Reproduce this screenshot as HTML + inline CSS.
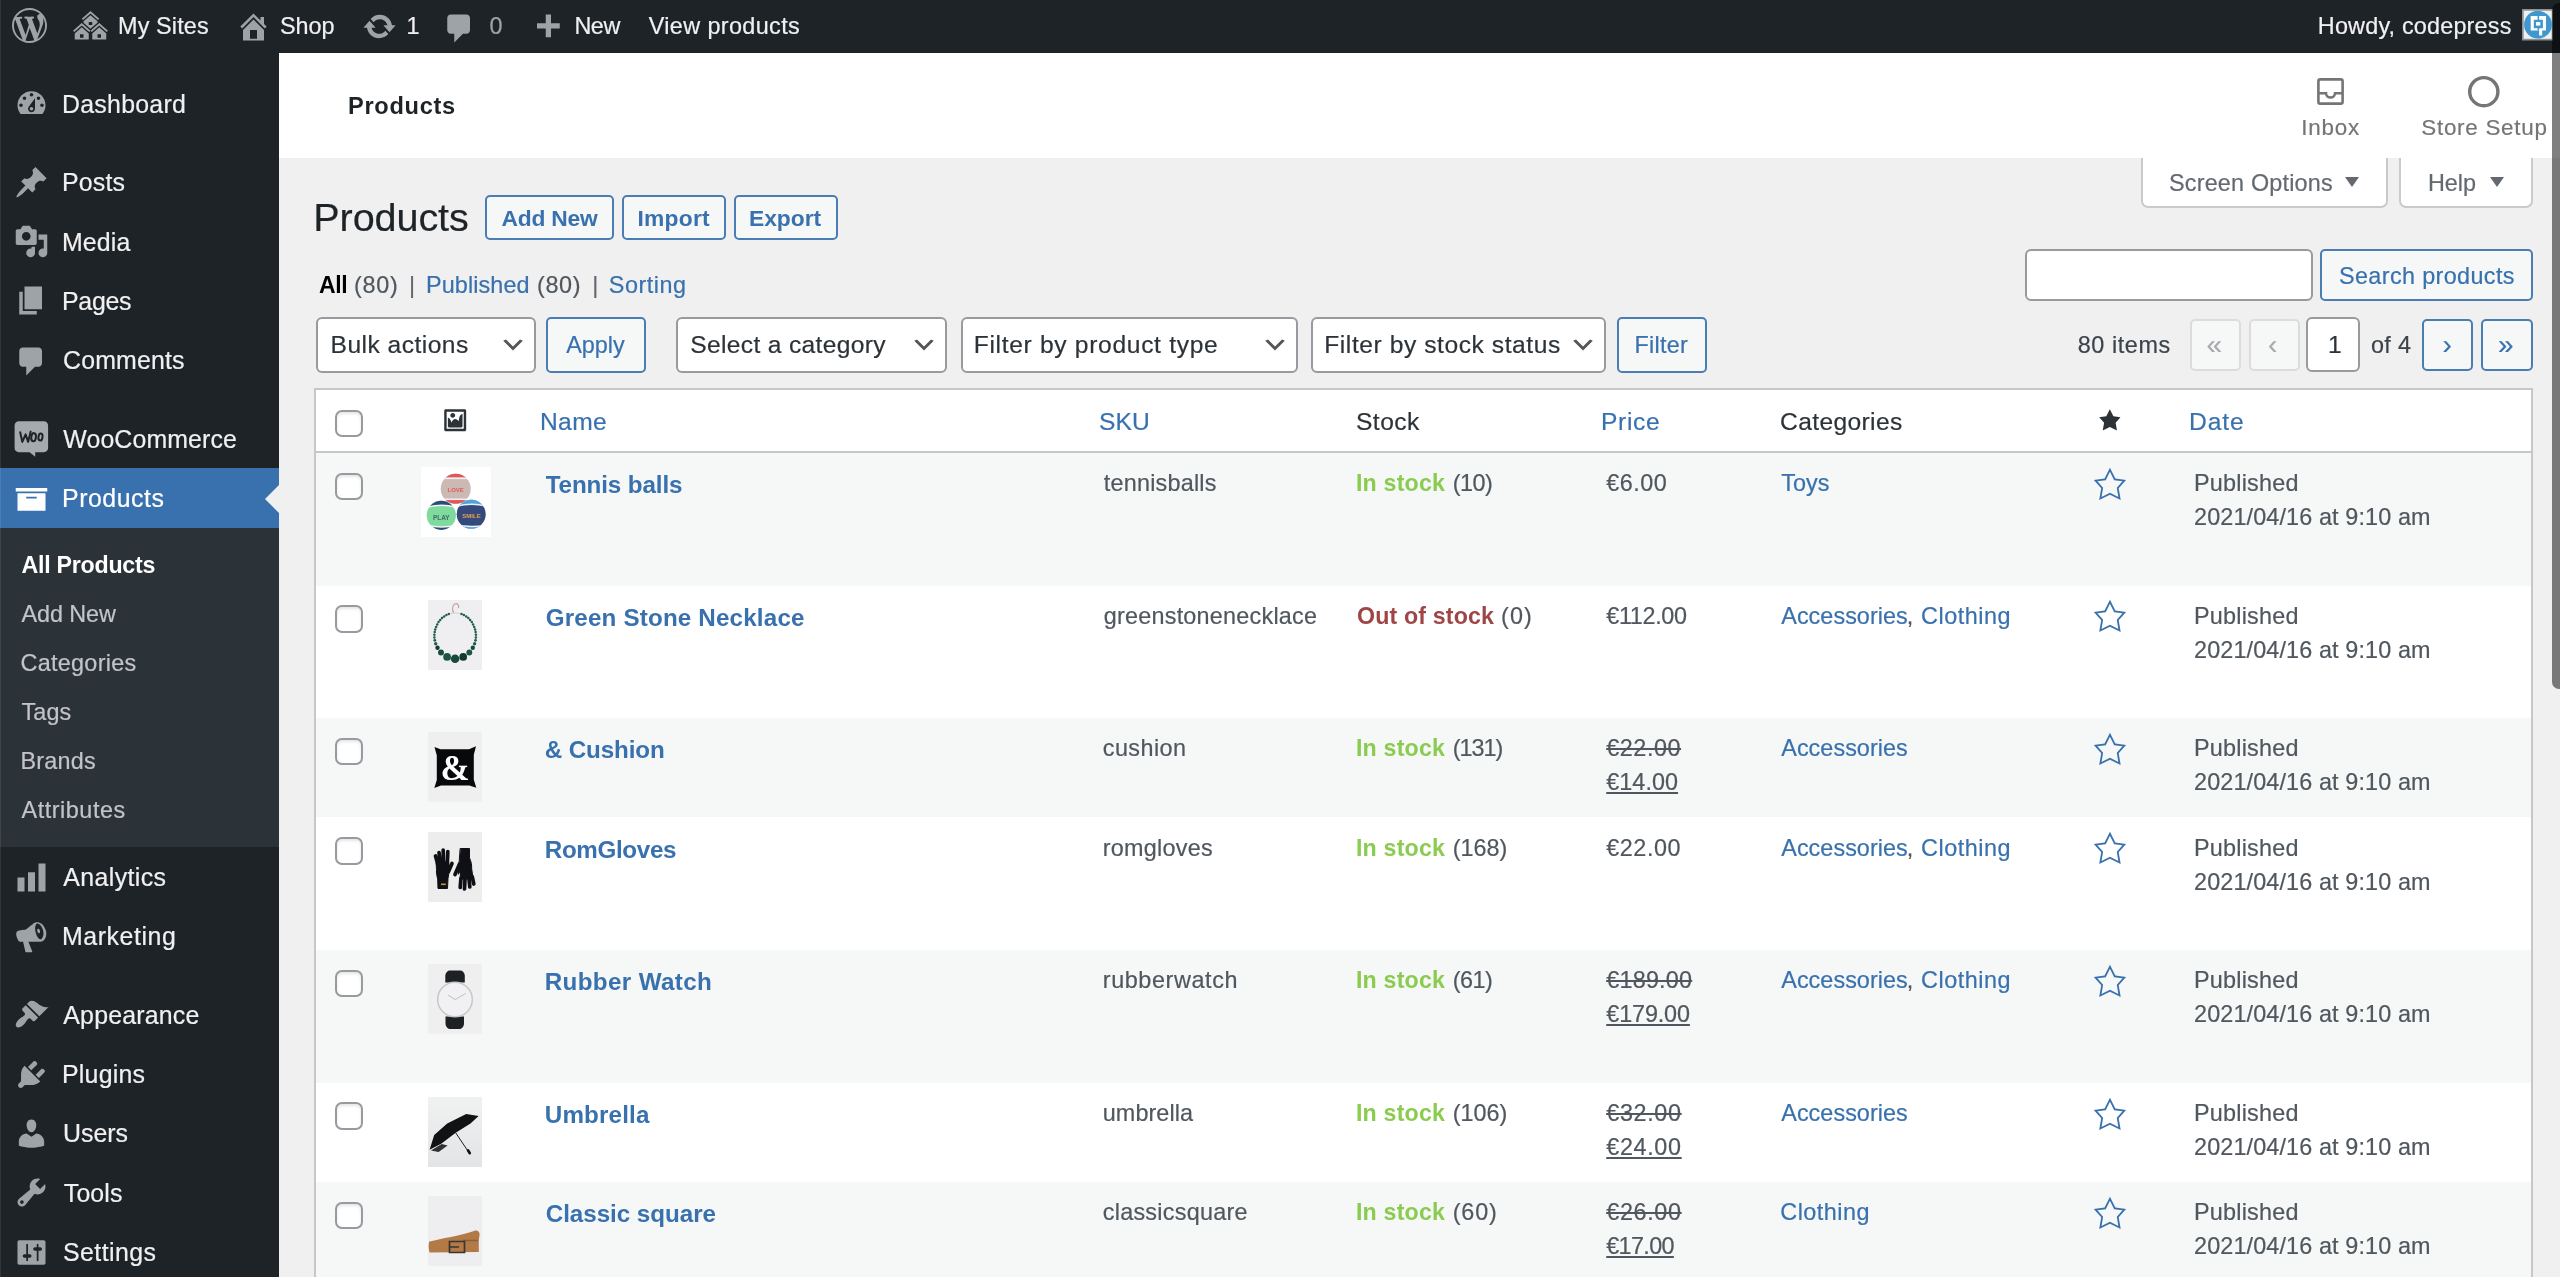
<!DOCTYPE html>
<html lang="en"><head><meta charset="utf-8"><title>Products ‹ Shop — WordPress</title>
<style>
html,body{margin:0;padding:0;background:#f0f0f1}
body{font-family:"Liberation Sans", sans-serif;width:2560px;height:1277px;overflow:hidden;position:relative}
#page{position:absolute;left:0;top:0;width:2560px;height:1277px;overflow:hidden;background:#f0f0f1;will-change:transform}
#page div,#page .t,#page .ic{position:absolute;box-sizing:border-box}
.t{white-space:pre;display:block;text-decoration:none;margin:0;padding:0;font-style:normal;font-weight:400;-webkit-text-stroke:.2px}
.b{font-weight:700;-webkit-text-stroke:0}
.btn{border:2px solid #4a7db4;border-radius:5px;background:#f6f7f7}
.btn.dis{border-color:#dcdcde;background:#f6f7f7}
.sel{border:2px solid #979a9f;border-radius:6px;background:#fff}
.cb{border:2px solid #979a9f;border-radius:7px;background:#fff;box-shadow:inset 0 2px 3px rgba(0,0,0,.1)}
.alt{background:#f6f7f7}
.th{filter:blur(.45px)}
</style></head>
<body>
<div id="page">
<!-- screen meta links -->
<div style="left:2141px;top:150px;width:247px;height:58px;background:#fff;border:2px solid #c9cacd;border-radius:0 0 7px 7px"></div>
<span class="t" style="left:2169.00px;top:167.90px;font-size:23.4px;line-height:30px;color:#646970;letter-spacing:0.190px;">Screen Options</span>
<div style="left:2344.6px;top:177px;width:0;height:0;border-left:7.2px solid transparent;border-right:7.2px solid transparent;border-top:10px solid #646970"></div>
<div style="left:2399px;top:150px;width:134px;height:58px;background:#fff;border:2px solid #c9cacd;border-radius:0 0 7px 7px"></div>
<span class="t" style="left:2428.00px;top:167.90px;font-size:23.4px;line-height:30px;color:#646970;letter-spacing:-0.032px;">Help</span>
<div style="left:2490px;top:177px;width:0;height:0;border-left:7.2px solid transparent;border-right:7.2px solid transparent;border-top:10px solid #646970"></div>
<!-- WooCommerce header -->
<div class="wc-header" style="left:279px;top:53px;width:2281px;height:105px;background:#fff"></div>
<h1 class="t b" style="left:348.00px;top:91.00px;font-size:23.6px;line-height:31px;color:#1d2327;letter-spacing:0.695px;">Products</h1>
<svg class="ic" style="left:2314px;top:75px" width="33" height="33" viewBox="0 0 24 24"><path fill="none" stroke="#757575" stroke-width="1.9" stroke-linejoin="round" d="M4.6 3.2h14.8c.8 0 1.400.600 1.400 1.400v14.800c0 .800-.600 1.400-1.400 1.400H4.600c-.800 0-1.400-.600-1.400-1.400V4.600c0-.800.600-1.400 1.400-1.400z"/><path fill="none" stroke="#757575" stroke-width="1.9" d="M3.200 13.300h5.500c0 1.800 1.500 3.100 3.300 3.100s3.300-1.300 3.300-3.100h5.500"/></svg>
<span class="t" style="left:2301.30px;top:113.20px;font-size:22.4px;line-height:29px;color:#757575;letter-spacing:0.780px;">Inbox</span>
<svg class="ic" style="left:2466px;top:74px" width="36" height="36" viewBox="0 0 36 36"><circle cx="17.800" cy="17.700" r="14.100" fill="none" stroke="#757575" stroke-width="3.400"/></svg>
<span class="t" style="left:2421.30px;top:113.20px;font-size:22.4px;line-height:29px;color:#757575;letter-spacing:0.730px;">Store Setup</span>
<!-- heading -->
<h1 class="t" style="left:313.30px;top:192.20px;font-size:39.6px;line-height:51px;color:#1d2327;letter-spacing:-0.100px;">Products</h1>
<div class="btn" style="left:485px;top:195px;width:129px;height:45px;"></div>
<a class="t b" style="left:501.50px;top:203.00px;font-size:22.8px;line-height:30px;color:#3871ae;letter-spacing:-0.215px;">Add New</a>
<div class="btn" style="left:621.5px;top:195px;width:104.5px;height:45px;"></div>
<a class="t b" style="left:637.50px;top:203.00px;font-size:22.8px;line-height:30px;color:#3871ae;letter-spacing:0.235px;">Import</a>
<div class="btn" style="left:733.5px;top:195px;width:104.5px;height:45px;"></div>
<a class="t b" style="left:749.00px;top:203.00px;font-size:22.8px;line-height:30px;color:#3871ae;letter-spacing:-0.021px;">Export</a>
<!-- views -->
<span class="t b" style="left:319.10px;top:270.20px;font-size:23.0px;line-height:30px;color:#000;letter-spacing:-0.400px;">All</span>
<span class="t" style="left:354.00px;top:270.20px;font-size:23.4px;line-height:30px;color:#50575e;letter-spacing:0.731px;">(80)</span>
<span class="t" style="left:409.00px;top:270.20px;font-size:23.4px;line-height:30px;color:#646970;">|</span>
<a class="t" style="left:426.00px;top:270.20px;font-size:23.4px;line-height:30px;color:#3871ae;letter-spacing:0.109px;">Published</a>
<span class="t" style="left:537.00px;top:270.20px;font-size:23.4px;line-height:30px;color:#50575e;letter-spacing:0.631px;">(80)</span>
<span class="t" style="left:592.20px;top:270.20px;font-size:23.4px;line-height:30px;color:#646970;">|</span>
<a class="t" style="left:608.80px;top:270.20px;font-size:23.4px;line-height:30px;color:#3871ae;letter-spacing:0.533px;">Sorting</a>
<!-- search -->
<div class="sel" style="left:2025px;top:249px;width:288px;height:51.5px;"></div>
<div class="btn" style="left:2320px;top:249px;width:213px;height:51.5px;"></div>
<a class="t" style="left:2339.00px;top:260.60px;font-size:23.4px;line-height:30px;color:#3871ae;letter-spacing:0.369px;">Search products</a>
<!-- tablenav -->
<div class="sel" style="left:316px;top:317px;width:219.5px;height:55.5px;"></div>
<span class="t" style="left:330.50px;top:329.00px;font-size:24.6px;line-height:32px;color:#2c3338;letter-spacing:0.472px;">Bulk actions</span>
<svg class="ic" style="left:498.8px;top:331.4px" width="28" height="28" viewBox="0 0 20 20" ><path fill="#555" d="M5 6l5 5 5-5 2 1-7 7-7-7 2-1z"/></svg>
<div class="btn" style="left:546px;top:317px;width:99.75px;height:55.5px;"></div>
<a class="t" style="left:566.25px;top:330.00px;font-size:23.4px;line-height:30px;color:#3871ae;letter-spacing:-0.016px;">Apply</a>
<div class="sel" style="left:676px;top:317px;width:271px;height:55.5px;"></div>
<span class="t" style="left:690.25px;top:329.00px;font-size:24.6px;line-height:32px;color:#2c3338;letter-spacing:0.329px;">Select a category</span>
<svg class="ic" style="left:910.3px;top:331.4px" width="28" height="28" viewBox="0 0 20 20" ><path fill="#555" d="M5 6l5 5 5-5 2 1-7 7-7-7 2-1z"/></svg>
<div class="sel" style="left:960.5px;top:317px;width:337.5px;height:55.5px;"></div>
<span class="t" style="left:973.75px;top:329.00px;font-size:24.6px;line-height:32px;color:#2c3338;letter-spacing:0.680px;">Filter by product type</span>
<svg class="ic" style="left:1261.3px;top:331.4px" width="28" height="28" viewBox="0 0 20 20" ><path fill="#555" d="M5 6l5 5 5-5 2 1-7 7-7-7 2-1z"/></svg>
<div class="sel" style="left:1311px;top:317px;width:294.5px;height:55.5px;"></div>
<span class="t" style="left:1324.25px;top:329.00px;font-size:24.6px;line-height:32px;color:#2c3338;letter-spacing:0.567px;">Filter by stock status</span>
<svg class="ic" style="left:1568.8px;top:331.4px" width="28" height="28" viewBox="0 0 20 20" ><path fill="#555" d="M5 6l5 5 5-5 2 1-7 7-7-7 2-1z"/></svg>
<div class="btn" style="left:1617px;top:317px;width:90px;height:55.5px;"></div>
<a class="t" style="left:1634.50px;top:330.00px;font-size:23.4px;line-height:30px;color:#3871ae;letter-spacing:0.262px;">Filter</a>
<span class="t" style="left:2077.75px;top:330.00px;font-size:23.4px;line-height:30px;color:#3c434a;letter-spacing:0.578px;">80 items</span>
<div class="btn dis" style="left:2189.7px;top:319px;width:51.3px;height:51.5px;"></div>
<span class="t" style="left:2206.50px;top:327.00px;font-size:28px;line-height:36px;color:#a7aaad;">«</span>
<div class="btn dis" style="left:2248.6px;top:319px;width:51.3px;height:51.5px;"></div>
<span class="t" style="left:2268.00px;top:327.00px;font-size:28px;line-height:36px;color:#a7aaad;">‹</span>
<div class="sel" style="left:2306px;top:317.4px;width:54px;height:54.6px;"></div>
<span class="t" style="left:2328.00px;top:329.00px;font-size:24.6px;line-height:32px;color:#2c3338;">1</span>
<span class="t" style="left:2371.00px;top:330.00px;font-size:23.4px;line-height:30px;color:#3c434a;letter-spacing:0.331px;">of 4</span>
<div class="btn" style="left:2421.8px;top:319px;width:51.3px;height:51.5px;"></div>
<span class="t" style="left:2442.50px;top:327.00px;font-size:28px;line-height:36px;color:#3871ae;">›</span>
<div class="btn" style="left:2480.7px;top:319px;width:51.9px;height:51.5px;"></div>
<span class="t" style="left:2498.00px;top:327.00px;font-size:28px;line-height:36px;color:#3871ae;">»</span>
<!-- products table -->
<div class="wp-list-table" style="left:314px;top:388px;width:2219px;height:900px;background:#fff;border:2px solid #c6c7ca"></div>
<div style="left:316px;top:451px;width:2215px;height:2px;background:#c6c7ca"></div>
<div class="cb" style="left:335px;top:409.5px;width:28px;height:27.5px;"></div>
<svg class="ic" style="left:442.6px;top:407.5px" width="24.4" height="24.4" viewBox="0 0 20 20" ><path fill="#2c3338" d="M2.250 1h15.500c.690 0 1.250.560 1.250 1.250v15.500c0 .690-.560 1.250-1.250 1.250H2.250C1.560 19 1 18.440 1 17.750V2.250C1 1.560 1.560 1 2.250 1zM17 17V3H3v14h14zM10 6c0-1.100-.900-2-2-2s-2 .900-2 2 .900 2 2 2 2-.900 2-2zm3 5s0-6 3-6v10c0 .550-.450 1-1 1H5c-.550 0-1-.450-1-1V8c2 0 3 4 3 4s1-3 3-3 3 2 3 2z"/></svg>
<a class="t" style="left:540.00px;top:406.00px;font-size:24.6px;line-height:32px;color:#3871ae;letter-spacing:0.358px;">Name</a>
<a class="t" style="left:1099.00px;top:406.00px;font-size:24.6px;line-height:32px;color:#3871ae;letter-spacing:0.096px;">SKU</a>
<span class="t" style="left:1356.00px;top:406.00px;font-size:24.6px;line-height:32px;color:#2c3338;letter-spacing:0.447px;">Stock</span>
<a class="t" style="left:1601.00px;top:406.00px;font-size:24.6px;line-height:32px;color:#3871ae;letter-spacing:0.661px;">Price</a>
<span class="t" style="left:1780.00px;top:406.00px;font-size:24.6px;line-height:32px;color:#2c3338;letter-spacing:0.374px;">Categories</span>
<svg class="ic" style="left:2097.8px;top:408.1px" width="23.7" height="23.7" viewBox="0 0 20 20" ><path fill="#2c3338" d="M10 1l3 6 6 .75-4.120 4.620L16 19l-6-3-6 3 1.130-6.630L1 7.750 7 7z"/></svg>
<a class="t" style="left:2189.00px;top:406.00px;font-size:24.6px;line-height:32px;color:#3871ae;letter-spacing:0.909px;">Date</a>
<!-- row: Tennis balls -->
<div style="left:316px;top:453px;width:2215px;height:132.5px;background:#f6f7f7"></div>
<div class="cb" style="left:335px;top:472.5px;width:28px;height:27.5px;"></div>
<svg class="ic th" style="left:420.5px;top:467px" width="70" height="70" viewBox="0 0 70 70"><rect width="70" height="70" fill="#fff"/>
<defs><clipPath id="b1"><circle cx="34.700" cy="21.800" r="15"/></clipPath><clipPath id="b2"><circle cx="20.300" cy="48.300" r="14.600"/></clipPath><clipPath id="b3"><circle cx="50.200" cy="47.200" r="14.500"/></clipPath></defs>
<g clip-path="url(#b1)"><rect x="19" y="6" width="32" height="32" fill="#cdb9b4"/><rect x="19" y="6" width="32" height="4.500" fill="#e0575b"/><rect x="19" y="10.500" width="32" height="1.600" fill="#f3eeee"/><rect x="19" y="31.500" width="32" height="1.600" fill="#f3eeee"/><rect x="19" y="33.100" width="32" height="5" fill="#e0575b"/></g>
<g clip-path="url(#b2)"><rect x="5" y="33" width="31" height="31" fill="#7fdb9c"/><path d="M5 33h31v8.300q-15-4.500-31 0z" fill="#f2f5f3"/><path d="M5 33h31v6.800q-15-4.500-31 0z" fill="#2b4a7e"/><path d="M5 64h31v-6.800q-15 4-31 0z" fill="#f2f5f3"/><path d="M5 64h31v-5.300q-15 4-31 0z" fill="#2b4a7e"/></g>
<g clip-path="url(#b3)"><rect x="35" y="32" width="31" height="31" fill="#36497c"/><path d="M35 32h31v8q-15-4-31 0z" fill="#eef1f5"/><path d="M35 32h31v6.500q-15-4-31 0z" fill="#4fa3dc"/><path d="M35 63h31v-6q-15 3.500-31 0z" fill="#eef1f5"/><path d="M35 63h31v-4.500q-15 3.500-31 0z" fill="#4fa3dc"/></g>
<text x="34.700" y="25" font-size="6" font-weight="700" text-anchor="middle" fill="#e0575b" font-family="Liberation Sans, sans-serif">LOVE</text>
<text x="20.300" y="53" font-size="6.500" font-weight="700" text-anchor="middle" fill="#3e6a70" font-family="Liberation Sans, sans-serif">PLAY</text>
<text x="50.500" y="50.500" font-size="6" font-weight="700" text-anchor="middle" fill="#e2a24a" font-family="Liberation Sans, sans-serif">SMILE</text></svg>
<a class="t b" style="left:545.75px;top:469.30px;font-size:24.2px;line-height:31px;color:#3871ae;letter-spacing:-0.117px;">Tennis balls</a>
<span class="t" style="left:1103.75px;top:468.35px;font-size:23.4px;line-height:30px;color:#50575e;letter-spacing:0.217px;">tennisballs</span>
<span class="t b" style="left:1356.00px;top:468.35px;font-size:23.2px;line-height:30px;color:#8acb50;letter-spacing:0.182px;">In stock</span>
<span class="t" style="left:1452.75px;top:468.35px;font-size:23.4px;line-height:30px;color:#50575e;letter-spacing:-0.519px;">(10)</span>
<span class="t" style="left:1606.25px;top:468.35px;font-size:23.4px;line-height:30px;color:#50575e;letter-spacing:0.494px;">€6.00</span>
<a class="t" style="left:1781.25px;top:468.35px;font-size:23.4px;line-height:30px;color:#3871ae;letter-spacing:0.034px;">Toys</a>
<svg class="ic" style="left:2091.7px;top:465.9px" width="35.9" height="35.9" viewBox="0 0 20 20" ><path fill="#3871ae" d="M10 1L7 7l-6 .75 4.130 4.620L4 19l6-3 6 3-1.120-6.630L19 7.750 13 7zm0 2.240l2.340 4.690 4.650.580-3.180 3.560.870 5.150L10 14.880l-4.680 2.340.870-5.150-3.180-3.560 4.650-.580z"/></svg>
<span class="t" style="left:2194.00px;top:468.35px;font-size:23.4px;line-height:30px;color:#50575e;letter-spacing:0.222px;">Published</span>
<span class="t" style="left:2194.00px;top:502.35px;font-size:23.4px;line-height:30px;color:#50575e;letter-spacing:0.120px;">2021/04/16 at 9:10 am</span>
<!-- row: Green Stone Necklace -->
<div class="cb" style="left:335px;top:605.0px;width:28px;height:27.5px;"></div>
<svg class="ic th" style="left:428px;top:600.0px" width="54" height="70" viewBox="0 0 54 70"><rect width="54" height="70" fill="#efeff1"/>
<path d="M25.600 12.800c-1.800-3-1.200-7.600 1.300-8.800s4.600 1.500 3.500 4" fill="none" stroke="#c9a096" stroke-width="1.200"/>
<ellipse cx="27.150" cy="35.850" rx="20.750" ry="22.850" fill="none" stroke="#c9a9a0" stroke-width=".5"/>
<circle cx="27.1" cy="58.7" r="4.25" fill="#184a3c"/><circle cx="35.2" cy="56.9" r="3.84" fill="#123a30"/><circle cx="19.1" cy="56.9" r="3.84" fill="#1e5645"/><circle cx="41.3" cy="52.5" r="2.95" fill="#1e5645"/><circle cx="13.0" cy="52.5" r="2.95" fill="#184a3c"/><circle cx="44.8" cy="47.8" r="2.18" fill="#184a3c"/><circle cx="9.5" cy="47.8" r="2.18" fill="#123a30"/><circle cx="46.6" cy="43.7" r="1.69" fill="#22604d"/><circle cx="7.7" cy="43.7" r="1.69" fill="#22604d"/><circle cx="47.5" cy="40.3" r="1.41" fill="#22604d"/><circle cx="6.8" cy="40.3" r="1.41" fill="#22604d"/><circle cx="47.9" cy="37.4" r="1.27" fill="#22604d"/><circle cx="6.4" cy="37.4" r="1.27" fill="#22604d"/><circle cx="47.9" cy="34.7" r="1.25" fill="#22604d"/><circle cx="6.4" cy="34.7" r="1.25" fill="#22604d"/><circle cx="47.6" cy="32.0" r="1.25" fill="#22604d"/><circle cx="6.7" cy="32.0" r="1.25" fill="#22604d"/><circle cx="47.1" cy="29.4" r="1.25" fill="#22604d"/><circle cx="7.2" cy="29.4" r="1.25" fill="#22604d"/><circle cx="46.2" cy="26.9" r="1.25" fill="#22604d"/><circle cx="8.1" cy="26.9" r="1.25" fill="#22604d"/><circle cx="45.1" cy="24.4" r="1.25" fill="#22604d"/><circle cx="9.2" cy="24.4" r="1.25" fill="#22604d"/><circle cx="43.8" cy="22.1" r="1.25" fill="#22604d"/><circle cx="10.5" cy="22.1" r="1.25" fill="#22604d"/><circle cx="42.1" cy="20.0" r="1.25" fill="#22604d"/><circle cx="12.2" cy="20.0" r="1.25" fill="#22604d"/><circle cx="40.3" cy="18.1" r="1.25" fill="#22604d"/><circle cx="14.0" cy="18.1" r="1.25" fill="#22604d"/><circle cx="38.2" cy="16.5" r="1.25" fill="#22604d"/><circle cx="16.1" cy="16.5" r="1.25" fill="#22604d"/><circle cx="35.9" cy="15.1" r="1.25" fill="#22604d"/><circle cx="18.4" cy="15.1" r="1.25" fill="#22604d"/><circle cx="33.5" cy="14.1" r="1.25" fill="#22604d"/><circle cx="20.8" cy="14.1" r="1.25" fill="#22604d"/></svg>
<a class="t b" style="left:545.75px;top:601.80px;font-size:24.2px;line-height:31px;color:#3871ae;letter-spacing:0.172px;">Green Stone Necklace</a>
<span class="t" style="left:1103.75px;top:600.85px;font-size:23.4px;line-height:30px;color:#50575e;letter-spacing:0.229px;">greenstonenecklace</span>
<span class="t b" style="left:1357.00px;top:600.85px;font-size:23.2px;line-height:30px;color:#9f4545;letter-spacing:0.148px;">Out of stock</span>
<span class="t" style="left:1501.00px;top:600.85px;font-size:23.4px;line-height:30px;color:#50575e;letter-spacing:1.101px;">(0)</span>
<span class="t" style="left:1606.25px;top:600.85px;font-size:23.4px;line-height:30px;color:#50575e;letter-spacing:-0.343px;">€112.00</span>
<a class="t" style="left:1781.25px;top:600.85px;font-size:23.4px;line-height:30px;color:#3871ae;letter-spacing:0.036px;">Accessories</a>
<span class="t" style="left:1906.80px;top:600.85px;font-size:23.4px;line-height:30px;color:#50575e;">,</span>
<a class="t" style="left:1921.00px;top:600.85px;font-size:23.4px;line-height:30px;color:#3871ae;letter-spacing:0.527px;">Clothing</a>
<svg class="ic" style="left:2091.7px;top:598.4px" width="35.9" height="35.9" viewBox="0 0 20 20" ><path fill="#3871ae" d="M10 1L7 7l-6 .75 4.130 4.620L4 19l6-3 6 3-1.120-6.630L19 7.750 13 7zm0 2.240l2.340 4.690 4.650.580-3.180 3.560.870 5.150L10 14.880l-4.680 2.340.870-5.150-3.180-3.560 4.650-.580z"/></svg>
<span class="t" style="left:2194.00px;top:600.85px;font-size:23.4px;line-height:30px;color:#50575e;letter-spacing:0.222px;">Published</span>
<span class="t" style="left:2194.00px;top:634.85px;font-size:23.4px;line-height:30px;color:#50575e;letter-spacing:0.120px;">2021/04/16 at 9:10 am</span>
<!-- row: and Cushion -->
<div style="left:316px;top:718.1px;width:2215px;height:99.4px;background:#f6f7f7"></div>
<div class="cb" style="left:335px;top:737.6px;width:28px;height:27.5px;"></div>
<svg class="ic th" style="left:428px;top:732.1px" width="54" height="70" viewBox="0 0 54 70"><rect width="54" height="70" fill="#efefef"/>
<path d="M6.500 15l6 2.200h28.500l7-3-2.200 8.500v25l2.500 8-7-2.200H13l-6.700 2.400 2.500-8v-24.500z" fill="#08090b"/>
<text x="27.200" y="47.500" font-size="35" font-weight="700" text-anchor="middle" fill="#fff" font-family="Liberation Serif, serif">&amp;</text></svg>
<a class="t b" style="left:544.75px;top:734.40px;font-size:24.2px;line-height:31px;color:#3871ae;letter-spacing:-0.113px;">&amp; Cushion</a>
<span class="t" style="left:1102.75px;top:733.45px;font-size:23.4px;line-height:30px;color:#50575e;letter-spacing:0.439px;">cushion</span>
<span class="t b" style="left:1356.00px;top:733.45px;font-size:23.2px;line-height:30px;color:#8acb50;letter-spacing:0.182px;">In stock</span>
<span class="t" style="left:1452.75px;top:733.45px;font-size:23.4px;line-height:30px;color:#50575e;letter-spacing:-1.016px;">(131)</span>
<del class="t" style="left:1606.25px;top:733.45px;font-size:23.4px;line-height:30px;color:#50575e;letter-spacing:0.543px;text-decoration:line-through;">€22.00</del>
<ins class="t" style="left:1606.25px;top:767.45px;font-size:23.4px;line-height:30px;color:#50575e;letter-spacing:0.043px;text-decoration:underline;">€14.00</ins>
<a class="t" style="left:1781.25px;top:733.45px;font-size:23.4px;line-height:30px;color:#3871ae;letter-spacing:0.036px;">Accessories</a>
<svg class="ic" style="left:2091.7px;top:731.0px" width="35.9" height="35.9" viewBox="0 0 20 20" ><path fill="#3871ae" d="M10 1L7 7l-6 .75 4.130 4.620L4 19l6-3 6 3-1.120-6.630L19 7.750 13 7zm0 2.240l2.340 4.690 4.650.580-3.180 3.560.870 5.150L10 14.880l-4.680 2.340.870-5.150-3.180-3.560 4.650-.580z"/></svg>
<span class="t" style="left:2194.00px;top:733.45px;font-size:23.4px;line-height:30px;color:#50575e;letter-spacing:0.222px;">Published</span>
<span class="t" style="left:2194.00px;top:767.45px;font-size:23.4px;line-height:30px;color:#50575e;letter-spacing:0.120px;">2021/04/16 at 9:10 am</span>
<!-- row: RomGloves -->
<div class="cb" style="left:335px;top:837.0px;width:28px;height:27.5px;"></div>
<svg class="ic th" style="left:428px;top:831.5px" width="54" height="70" viewBox="0 0 54 70"><rect width="54" height="70" fill="#ededee"/>
<g fill="#0e1015" stroke="#0e1015" stroke-linejoin="round" stroke-linecap="round">
<path stroke-width="3.700" fill="none" d="M7.500 24l2.500 9M11 20.500l1.500 12M15.200 18l.300 14M19.800 19.500l-.500 13M24 31.500l-3.500 8"/>
<path stroke-width="1" d="M8.500 31l12-1.500 1 8-1.500 9-.500 10h-9.500l-.300-9.500c-.800-3-1.500-6-1.200-9z"/>
<path stroke-width="1" d="M32.500 16.500h9v9.500c1.800 3.500 2.200 7 2.200 11l1.500 10h-13l.300-8.500-2 3.500z"/>
<path stroke-width="3.700" fill="none" d="M33 46l-.800 9.500M37 47l-.500 10M41 47l.800 8M44.300 45l1.500 7M31.500 32l-4.500 10.500"/>
</g><rect x="13" y="51.500" width="4.800" height="1.600" fill="#d58a3c"/></svg>
<a class="t b" style="left:544.75px;top:833.80px;font-size:24.2px;line-height:31px;color:#3871ae;letter-spacing:-0.339px;">RomGloves</a>
<span class="t" style="left:1102.75px;top:832.85px;font-size:23.4px;line-height:30px;color:#50575e;letter-spacing:0.256px;">romgloves</span>
<span class="t b" style="left:1356.00px;top:832.85px;font-size:23.2px;line-height:30px;color:#8acb50;letter-spacing:0.182px;">In stock</span>
<span class="t" style="left:1452.75px;top:832.85px;font-size:23.4px;line-height:30px;color:#50575e;letter-spacing:-0.016px;">(168)</span>
<span class="t" style="left:1606.25px;top:832.85px;font-size:23.4px;line-height:30px;color:#50575e;letter-spacing:0.543px;">€22.00</span>
<a class="t" style="left:1781.25px;top:832.85px;font-size:23.4px;line-height:30px;color:#3871ae;letter-spacing:0.036px;">Accessories</a>
<span class="t" style="left:1906.80px;top:832.85px;font-size:23.4px;line-height:30px;color:#50575e;">,</span>
<a class="t" style="left:1921.00px;top:832.85px;font-size:23.4px;line-height:30px;color:#3871ae;letter-spacing:0.527px;">Clothing</a>
<svg class="ic" style="left:2091.7px;top:830.4px" width="35.9" height="35.9" viewBox="0 0 20 20" ><path fill="#3871ae" d="M10 1L7 7l-6 .75 4.130 4.620L4 19l6-3 6 3-1.120-6.630L19 7.750 13 7zm0 2.240l2.340 4.690 4.650.580-3.180 3.560.870 5.150L10 14.880l-4.680 2.340.870-5.150-3.180-3.560 4.650-.580z"/></svg>
<span class="t" style="left:2194.00px;top:832.85px;font-size:23.4px;line-height:30px;color:#50575e;letter-spacing:0.222px;">Published</span>
<span class="t" style="left:2194.00px;top:866.85px;font-size:23.4px;line-height:30px;color:#50575e;letter-spacing:0.120px;">2021/04/16 at 9:10 am</span>
<!-- row: Rubber Watch -->
<div style="left:316px;top:950px;width:2215px;height:132.6px;background:#f6f7f7"></div>
<div class="cb" style="left:335px;top:969.5px;width:28px;height:27.5px;"></div>
<svg class="ic th" style="left:428px;top:964px" width="54" height="70" viewBox="0 0 54 70"><rect width="54" height="70" fill="#efeff0"/>
<path d="M17.300 18.500v-6.500c0-3.500 2.500-5.500 5-5.500h9.500c2.500 0 5 2 5 5.500v6.500z" fill="#1e2124"/><path d="M17.500 52.500h18.500v7c0 3.500-2.500 5.500-5 5.500h-8.500c-2.500 0-5-2-5-5.500z" fill="#1e2124"/>
<circle cx="27" cy="35.500" r="17.300" fill="#f1f1f3" stroke="#c6c7ca" stroke-width="1.500"/>
<path d="M20 31l7.200 4.500 10.500-6" fill="none" stroke="#9a9aa8" stroke-width=".6"/></svg>
<a class="t b" style="left:544.75px;top:966.30px;font-size:24.2px;line-height:31px;color:#3871ae;letter-spacing:0.362px;">Rubber Watch</a>
<span class="t" style="left:1102.75px;top:965.35px;font-size:23.4px;line-height:30px;color:#50575e;letter-spacing:0.604px;">rubberwatch</span>
<span class="t b" style="left:1356.00px;top:965.35px;font-size:23.2px;line-height:30px;color:#8acb50;letter-spacing:0.182px;">In stock</span>
<span class="t" style="left:1452.75px;top:965.35px;font-size:23.4px;line-height:30px;color:#50575e;letter-spacing:-0.519px;">(61)</span>
<del class="t" style="left:1606.25px;top:965.35px;font-size:23.4px;line-height:30px;color:#50575e;letter-spacing:0.201px;text-decoration:line-through;">€189.00</del>
<ins class="t" style="left:1606.25px;top:999.35px;font-size:23.4px;line-height:30px;color:#50575e;letter-spacing:-0.132px;text-decoration:underline;">€179.00</ins>
<a class="t" style="left:1781.25px;top:965.35px;font-size:23.4px;line-height:30px;color:#3871ae;letter-spacing:0.036px;">Accessories</a>
<span class="t" style="left:1906.80px;top:965.35px;font-size:23.4px;line-height:30px;color:#50575e;">,</span>
<a class="t" style="left:1921.00px;top:965.35px;font-size:23.4px;line-height:30px;color:#3871ae;letter-spacing:0.527px;">Clothing</a>
<svg class="ic" style="left:2091.7px;top:962.9px" width="35.9" height="35.9" viewBox="0 0 20 20" ><path fill="#3871ae" d="M10 1L7 7l-6 .75 4.130 4.620L4 19l6-3 6 3-1.120-6.630L19 7.750 13 7zm0 2.240l2.340 4.690 4.650.580-3.180 3.560.870 5.150L10 14.880l-4.680 2.340.870-5.150-3.180-3.560 4.650-.580z"/></svg>
<span class="t" style="left:2194.00px;top:965.35px;font-size:23.4px;line-height:30px;color:#50575e;letter-spacing:0.222px;">Published</span>
<span class="t" style="left:2194.00px;top:999.35px;font-size:23.4px;line-height:30px;color:#50575e;letter-spacing:0.120px;">2021/04/16 at 9:10 am</span>
<!-- row: Umbrella -->
<div class="cb" style="left:335px;top:1102.1px;width:28px;height:27.5px;"></div>
<svg class="ic th" style="left:428px;top:1096.6px" width="54" height="70" viewBox="0 0 54 70"><defs><linearGradient id="ug" x1="0" y1="0" x2="0" y2="1"><stop offset="0" stop-color="#f0f1f1"/><stop offset="1" stop-color="#e3e4e5"/></linearGradient></defs>
<rect width="54" height="70" fill="url(#ug)"/>
<path d="M1.600 52.700l4.600-14.800 13-11.300 19-9.500 12.400 1.800-8.100 7.700-14.800 9.200-14.100 10.600z" fill="#101214"/><path d="M3 53.500l10.600-6.600 6 1.500-9 6.500z" fill="#1b1d1f" opacity=".9"/>
<path d="M27.700 35.800l13.700 20.400" stroke="#1a1c1e" stroke-width="1" fill="none"/><path d="M40 53.300l1.800 2.900" stroke="#111" stroke-width="2.600" stroke-linecap="round"/></svg>
<a class="t b" style="left:544.75px;top:1098.90px;font-size:24.2px;line-height:31px;color:#3871ae;letter-spacing:0.171px;">Umbrella</a>
<span class="t" style="left:1102.75px;top:1097.95px;font-size:23.4px;line-height:30px;color:#50575e;letter-spacing:0.080px;">umbrella</span>
<span class="t b" style="left:1356.00px;top:1097.95px;font-size:23.2px;line-height:30px;color:#8acb50;letter-spacing:0.182px;">In stock</span>
<span class="t" style="left:1452.75px;top:1097.95px;font-size:23.4px;line-height:30px;color:#50575e;letter-spacing:-0.016px;">(106)</span>
<del class="t" style="left:1606.25px;top:1097.95px;font-size:23.4px;line-height:30px;color:#50575e;letter-spacing:0.643px;text-decoration:line-through;">€32.00</del>
<ins class="t" style="left:1606.25px;top:1131.95px;font-size:23.4px;line-height:30px;color:#50575e;letter-spacing:0.643px;text-decoration:underline;">€24.00</ins>
<a class="t" style="left:1781.25px;top:1097.95px;font-size:23.4px;line-height:30px;color:#3871ae;letter-spacing:0.036px;">Accessories</a>
<svg class="ic" style="left:2091.7px;top:1095.5px" width="35.9" height="35.9" viewBox="0 0 20 20" ><path fill="#3871ae" d="M10 1L7 7l-6 .75 4.130 4.620L4 19l6-3 6 3-1.120-6.630L19 7.750 13 7zm0 2.240l2.340 4.690 4.650.580-3.180 3.560.870 5.150L10 14.880l-4.680 2.340.870-5.150-3.180-3.560 4.650-.580z"/></svg>
<span class="t" style="left:2194.00px;top:1097.95px;font-size:23.4px;line-height:30px;color:#50575e;letter-spacing:0.222px;">Published</span>
<span class="t" style="left:2194.00px;top:1131.95px;font-size:23.4px;line-height:30px;color:#50575e;letter-spacing:0.120px;">2021/04/16 at 9:10 am</span>
<!-- row: Classic square -->
<div style="left:316px;top:1182px;width:2215px;height:99.4px;background:#f6f7f7"></div>
<div class="cb" style="left:335px;top:1201.5px;width:28px;height:27.5px;"></div>
<svg class="ic th" style="left:428px;top:1196px" width="54" height="70" viewBox="0 0 54 70"><rect width="54" height="70" fill="#eeeef0"/>
<path d="M1.600 45.600c12-3.500 30-5.700 44.400-10.700 3-1 5.600.5 5.600 3.600l-.8 6v11.500l-49.200.6c-1.200-3.500-1.200-8-.4-11z" fill="#b37a48"/>
<path d="M35 44.500h15" stroke="#8d5e36" stroke-width="1.500"/>
<path d="M21.500 45.500h15v11h-15zM22 51h9" fill="none" stroke="#3a3530" stroke-width="1.700"/></svg>
<a class="t b" style="left:545.75px;top:1198.30px;font-size:24.2px;line-height:31px;color:#3871ae;letter-spacing:-0.042px;">Classic square</a>
<span class="t" style="left:1102.75px;top:1197.35px;font-size:23.4px;line-height:30px;color:#50575e;letter-spacing:0.255px;">classicsquare</span>
<span class="t b" style="left:1356.00px;top:1197.35px;font-size:23.2px;line-height:30px;color:#8acb50;letter-spacing:0.182px;">In stock</span>
<span class="t" style="left:1452.75px;top:1197.35px;font-size:23.4px;line-height:30px;color:#50575e;letter-spacing:0.814px;">(60)</span>
<del class="t" style="left:1606.25px;top:1197.35px;font-size:23.4px;line-height:30px;color:#50575e;letter-spacing:0.643px;text-decoration:line-through;">€26.00</del>
<ins class="t" style="left:1606.25px;top:1231.35px;font-size:23.4px;line-height:30px;color:#50575e;letter-spacing:-0.657px;text-decoration:underline;">€17.00</ins>
<a class="t" style="left:1780.25px;top:1197.35px;font-size:23.4px;line-height:30px;color:#3871ae;letter-spacing:0.491px;">Clothing</a>
<svg class="ic" style="left:2091.7px;top:1194.9px" width="35.9" height="35.9" viewBox="0 0 20 20" ><path fill="#3871ae" d="M10 1L7 7l-6 .75 4.130 4.620L4 19l6-3 6 3-1.120-6.630L19 7.750 13 7zm0 2.240l2.340 4.690 4.650.580-3.180 3.560.870 5.150L10 14.880l-4.680 2.340.870-5.150-3.180-3.560 4.650-.580z"/></svg>
<span class="t" style="left:2194.00px;top:1197.35px;font-size:23.4px;line-height:30px;color:#50575e;letter-spacing:0.222px;">Published</span>
<span class="t" style="left:2194.00px;top:1231.35px;font-size:23.4px;line-height:30px;color:#50575e;letter-spacing:0.120px;">2021/04/16 at 9:10 am</span>
<!-- admin menu -->
<div class="adminmenu" style="left:0px;top:53px;width:279px;height:1224px;background:#1d2327"></div>
<svg class="ic" style="left:13.7px;top:86.2px" width="35" height="35" viewBox="0 0 20 20" ><path fill="#9ea3a8" d="M3.76 16h12.48c1.1-1.37 1.76-3.11 1.76-5 0-4.42-3.58-8-8-8s-8 3.58-8 8c0 1.89.66 3.63 1.76 5zM10 4c.55 0 1 .45 1 1s-.45 1-1 1-1-.45-1-1 .45-1 1-1zM6 6c.55 0 1 .45 1 1s-.45 1-1 1-1-.45-1-1 .45-1 1-1zm8 0c.55 0 1 .45 1 1s-.45 1-1 1-1-.45-1-1 .45-1 1-1zm-5.37 5.55L12 7v6c0 1.1-.9 2-2 2s-2-.9-2-2c0-.57.24-1.08.63-1.45zM4 10c.55 0 1 .45 1 1s-.45 1-1 1-1-.45-1-1 .45-1 1-1zm12 0c.55 0 1 .45 1 1s-.45 1-1 1-1-.45-1-1 .45-1 1-1zm-5 3c0-.55-.45-1-1-1s-1 .45-1 1 .45 1 1 1 1-.45 1-1z"/></svg>
<a class="t" style="left:62.00px;top:87.70px;font-size:24.9px;line-height:32px;color:#f0f0f1;letter-spacing:0.259px;">Dashboard</a>
<svg class="ic" style="left:13.7px;top:164.7px" width="35" height="35" viewBox="0 0 20 20" ><path fill="#9ea3a8" d="M10.44 3.02l1.82-1.82 6.36 6.35-1.83 1.82c-1.05-.68-2.48-.57-3.41.36l-.75.75c-.92.93-1.04 2.35-.35 3.41l-1.83 1.82-2.41-2.41-2.8 2.79c-.42.42-3.38 2.71-3.8 2.29s1.86-3.39 2.28-3.81l2.79-2.79L4.1 9.36l1.83-1.82c1.05.69 2.48.57 3.4-.36l.75-.75c.93-.92 1.05-2.35.36-3.41z"/></svg>
<a class="t" style="left:62.00px;top:166.20px;font-size:24.9px;line-height:32px;color:#f0f0f1;letter-spacing:0.174px;">Posts</a>
<svg class="ic" style="left:13.7px;top:224.0px" width="35" height="35" viewBox="0 0 20 20" ><path fill="#9ea3a8" d="M13 11V4c0-.55-.45-1-1-1h-1.67L9 1H5L3.67 3H2c-.55 0-1 .45-1 1v7c0 .55.45 1 1 1h10c.55 0 1-.45 1-1zM7 4.5c1.38 0 2.5 1.12 2.5 2.5S8.38 9.500 7 9.500 4.500 8.380 4.500 7 5.620 4.500 7 4.500zM14 6h5v10.500c0 1.380-1.120 2.500-2.500 2.500S14 17.880 14 16.500s1.120-2.500 2.500-2.500c.170 0 .340.020.500.050V9h-3V6zm-4 8.050V13h2v3.500c0 1.380-1.120 2.500-2.500 2.500S7 17.880 7 16.500 8.120 14 9.500 14c.170 0 .340.020.500.050z"/></svg>
<a class="t" style="left:62.00px;top:225.50px;font-size:24.9px;line-height:32px;color:#f0f0f1;letter-spacing:0.138px;">Media</a>
<svg class="ic" style="left:13.7px;top:283.3px" width="35" height="35" viewBox="0 0 20 20" ><path fill="#9ea3a8" d="M6 15V2h10v13H6zm-1 1h8v2H3V5h2v11z"/></svg>
<a class="t" style="left:62.00px;top:284.80px;font-size:24.9px;line-height:32px;color:#f0f0f1;letter-spacing:-0.283px;">Pages</a>
<svg class="ic" style="left:13.7px;top:343.6px" width="35" height="35" viewBox="0 0 20 20" ><path fill="#9ea3a8" d="M5 2h9c1.1 0 2 .9 2 2v7c0 1.1-.9 2-2 2h-2l-5 5v-5H5c-1.1 0-2-.9-2-2V4c0-1.1.9-2 2-2z"/></svg>
<a class="t" style="left:63.00px;top:344.10px;font-size:24.9px;line-height:32px;color:#f0f0f1;letter-spacing:0.159px;">Comments</a>
<svg class="ic" style="left:14px;top:421px" width="36" height="37" viewBox="0 0 36 37"><path fill="#a7aaad" d="M4.800 .300h25.100c2.300 0 4.200 1.900 4.200 4.200v22.600c0 2.300-1.900 4.200-4.200 4.200H21.200v4.400l-5.600-4.400H4.800c-2.300 0-4.200-1.900-4.200-4.200V4.500C.600 2.200 2.500.300 4.800.300z"/><g fill="none" stroke="#1d2327" stroke-width="2" stroke-linecap="round" stroke-linejoin="round"><path d="M6.200 11.300l2.100 9.600 3.300-7.600 2.500 7.600 2.600-10.300"/><ellipse cx="19.600" cy="16.200" rx="2.300" ry="4.100" transform="rotate(8 19.600 16.200)"/><ellipse cx="26.500" cy="16" rx="2" ry="3.600" transform="rotate(8 26.500 16)"/></g></svg>
<a class="t" style="left:63.30px;top:422.60px;font-size:24.9px;line-height:32px;color:#f0f0f1;letter-spacing:0.111px;">WooCommerce</a>
<div style="left:0px;top:468.4px;width:279px;height:59.3px;background:#3871ae"></div>
<svg class="ic" style="left:13.7px;top:480.5px" width="35" height="35" viewBox="0 0 20 20" ><path fill="#fff" d="M19 4v2H1V4h18zM2 7h16v10H2V7zm11 3V9H7v1h6z"/></svg>
<a class="t" style="left:62.00px;top:482.00px;font-size:24.9px;line-height:32px;color:#fff;letter-spacing:0.531px;">Products</a>
<div style="left:265.2px;top:484.5px;width:0;height:0;border-top:14.7px solid transparent;border-bottom:14.7px solid transparent;border-right:14px solid #f0f0f1"></div>
<div style="left:0px;top:527.6px;width:279px;height:319.6px;background:#2c3338"></div>
<a class="t b" style="left:21.50px;top:550.00px;font-size:23.2px;line-height:30px;color:#fff;letter-spacing:-0.243px;">All Products</a>
<a class="t" style="left:21.50px;top:599.20px;font-size:23.4px;line-height:30px;color:#c3c4c7;letter-spacing:-0.086px;">Add New</a>
<a class="t" style="left:20.50px;top:648.20px;font-size:23.4px;line-height:30px;color:#c3c4c7;letter-spacing:0.287px;">Categories</a>
<a class="t" style="left:21.50px;top:697.20px;font-size:23.4px;line-height:30px;color:#c3c4c7;letter-spacing:0.096px;">Tags</a>
<a class="t" style="left:20.50px;top:746.20px;font-size:23.4px;line-height:30px;color:#c3c4c7;letter-spacing:0.217px;">Brands</a>
<a class="t" style="left:21.50px;top:795.20px;font-size:23.4px;line-height:30px;color:#c3c4c7;letter-spacing:0.543px;">Attributes</a>
<svg class="ic" style="left:13.7px;top:859.5px" width="35" height="35" viewBox="0 0 20 20" ><path fill="#9ea3a8" d="M18 18V2h-4v16h4zm-6 0V7H8v11h4zm-6 0v-8H2v8h4z"/></svg>
<a class="t" style="left:63.30px;top:861.00px;font-size:24.9px;line-height:32px;color:#f0f0f1;letter-spacing:0.381px;">Analytics</a>
<svg class="ic" style="left:13.7px;top:918.8px" width="35" height="35" viewBox="0 0 20 20" ><path fill="#9ea3a8" d="M18.150 5.940c.460 1.620.380 3.220-.020 4.480-.420 1.280-1.260 2.180-2.300 2.480-.160.060-.260.060-.400.060-.060.020-.120.020-.180.020-.060.020-.140.020-.220.020h-6.800l2.220 5.500c.020.140-.060.260-.140.340-.080.100-.240.160-.340.160H6.950c-.100 0-.260-.060-.340-.160-.080-.080-.160-.200-.140-.340L5.200 13H3.600c-.2 0-.4-.06-.58-.14-.18-.1-.34-.24-.46-.4-.48-.64-.86-1.480-1.100-2.440-.26-1-.26-1.620 0-2.420.16-.48.56-.8 1.020-.94.3-.1 3.980-.5 3.980-.5s3.320-2.540 4.240-3.200c.56-.4.960-.8 1.820-1.060 1.040-.3 2.220.02 3.260.88 1.040.86 1.920 2.320 2.380 3.960zM15.540 11.500c.42-.18.820-.82 1.080-1.720.28-.92.320-2.200-.080-3.560-.38-1.360-1.120-2.480-1.860-3.100-.6-.5-1.180-.66-1.540-.54-.72.220-1.580 2.300-.62 5.500.94 3.200 2.360 3.620 3.020 3.420zM13.700 5.640c.42-.12.920.28 1.120.98.200.7.020 1.380-.40 1.500-.42.120-.86-.34-1.060-1.040-.2-.7-.08-1.320.34-1.440z"/></svg>
<a class="t" style="left:62.00px;top:920.30px;font-size:24.9px;line-height:32px;color:#f0f0f1;letter-spacing:0.570px;">Marketing</a>
<svg class="ic" style="left:13.7px;top:997.3px" width="35" height="35" viewBox="0 0 20 20" ><path fill="#9ea3a8" d="M14.480 11.060L7.410 3.990l1.500-1.500c.500-.560 2.300-.470 3.510.320 1.210.800 1.430 1.280 2.910 2.100 1.180.640 2.450 1.260 4.450.850zm-.710.710L6.700 4.700 4.930 6.470c-.390.390-.390 1.020 0 1.410l1.060 1.060c.390.390.390 1.030 0 1.420-.600.600-1.430 1.110-2.210 1.690-.350.260-.700.530-1.010.840C1.430 14.230.400 16.080 1.400 17.070c.990 1 2.840-.030 4.180-1.360.310-.310.580-.660.850-1.020.570-.780 1.080-1.610 1.690-2.210.390-.390 1.020-.390 1.410 0l1.060 1.060c.390.390 1.020.390 1.410 0z"/></svg>
<a class="t" style="left:63.30px;top:998.80px;font-size:24.9px;line-height:32px;color:#f0f0f1;letter-spacing:0.201px;">Appearance</a>
<svg class="ic" style="left:13.7px;top:1056.6px" width="35" height="35" viewBox="0 0 20 20" ><path fill="#9ea3a8" d="M13.110 4.360L9.870 7.600 8 5.730l3.240-3.240c.350-.340 1.050-.200 1.560.320.520.510.660 1.210.310 1.550zm-8 1.770l.910-1.120 9.010 9.010-1.190.840c-.710.710-2.630 1.160-3.820 1.160H6.140L4.900 17.260c-.590.590-1.540.590-2.120 0-.590-.580-.590-1.530 0-2.120l1.240-1.240v-3.880c0-1.130.400-3.190 1.090-3.890zm7.260 3.970l3.240-3.240c.340-.350 1.040-.210 1.550.310.520.510.660 1.210.310 1.550l-3.240 3.250z"/></svg>
<a class="t" style="left:62.00px;top:1058.10px;font-size:24.9px;line-height:32px;color:#f0f0f1;letter-spacing:0.218px;">Plugins</a>
<svg class="ic" style="left:13.7px;top:1115.9px" width="35" height="35" viewBox="0 0 20 20" ><path fill="#9ea3a8" d="M10 9.250c-2.270 0-2.730-3.440-2.730-3.440C7 4.020 7.820 2 9.970 2c2.160 0 2.980 2.020 2.710 3.810 0 0-.410 3.440-2.680 3.440zm0 2.570L12.720 10c2.390 0 4.520 2.330 4.520 4.530v2.490s-3.650 1.130-7.240 1.130c-3.650 0-7.240-1.130-7.240-1.130v-2.490c0-2.250 1.940-4.480 4.470-4.480z"/></svg>
<a class="t" style="left:63.00px;top:1117.40px;font-size:24.9px;line-height:32px;color:#f0f0f1;letter-spacing:-0.013px;">Users</a>
<svg class="ic" style="left:13.7px;top:1175.2px" width="35" height="35" viewBox="0 0 20 20" ><path fill="#9ea3a8" d="M16.680 9.770c-1.340 1.340-3.300 1.670-4.950.990l-5.410 6.520c-.990.990-2.590.990-3.580 0s-.990-2.590 0-3.570l6.520-5.420c-.680-1.650-.350-3.610.990-4.950 1.280-1.280 3.120-1.620 4.720-1.060l-2.890 2.890 2.820 2.820 2.860-2.870c.530 1.580.180 3.390-1.080 4.650zM3.810 16.210c.400.390 1.040.390 1.430 0 .400-.400.400-1.040 0-1.430-.390-.400-1.030-.400-1.430 0-.390.390-.390 1.030 0 1.430z"/></svg>
<a class="t" style="left:63.80px;top:1176.70px;font-size:24.9px;line-height:32px;color:#f0f0f1;letter-spacing:0.135px;">Tools</a>
<svg class="ic" style="left:13.7px;top:1234.5px" width="35" height="35" viewBox="0 0 20 20" ><path fill="#9ea3a8" d="M18 16V4c0-.550-.450-1-1-1H3c-.550 0-1 .450-1 1v12c0 .550.450 1 1 1h14c.550 0 1-.450 1-1zM8 11h1c.550 0 1 .450 1 1s-.450 1-1 1H8v1.500c0 .280-.220.500-.500.500s-.500-.220-.500-.500V13H6c-.550 0-1-.450-1-1s.450-1 1-1h1V5.500c0-.280.220-.500.500-.500s.500.220.500.500V11zm5-2h-1c-.550 0-1-.450-1-1s.450-1 1-1h1V5.500c0-.280.220-.500.500-.500s.500.220.500.500V7h1c.550 0 1 .450 1 1s-.450 1-1 1h-1v5.500c0 .280-.220.500-.500.500s-.500-.220-.500-.500V9z"/></svg>
<a class="t" style="left:63.00px;top:1236.00px;font-size:24.9px;line-height:32px;color:#f0f0f1;letter-spacing:0.430px;">Settings</a>
<!-- admin bar -->
<div class="wpadminbar" style="left:0px;top:0px;width:2560px;height:53px;background:#1d2327"></div>
<svg class="ic" style="left:12px;top:8px" width="35" height="35" viewBox="0 0 20 20" ><path fill="#9ea3a8" d="M20 10c0-5.51-4.49-10-10-10C4.48 0 0 4.49 0 10c0 5.52 4.48 10 10 10 5.51 0 10-4.48 10-10zM7.78 15.37L4.37 6.22c.55-.02 1.17-.08 1.17-.08.5-.06.44-1.13-.06-1.11 0 0-1.45.11-2.37.11-.18 0-.37 0-.58-.01C4.12 2.69 6.87 1.11 10 1.11c2.33 0 4.45.87 6.05 2.34-.68-.11-1.65.39-1.65 1.58 0 .74.45 1.36.9 2.1.35.61.55 1.36.55 2.46 0 1.49-1.4 5-1.4 5l-3.03-8.37c.54-.02.82-.17.82-.17.5-.05.44-1.25-.06-1.22 0 0-1.44.12-2.38.12-.87 0-2.33-.12-2.33-.12-.5-.03-.56 1.2-.06 1.22l.92.08 1.26 3.41zM17.41 10c.24-.64.74-1.87.43-4.25.7 1.29 1.05 2.71 1.05 4.25 0 3.29-1.73 6.24-4.4 7.78.97-2.59 1.94-5.2 2.92-7.78zM6.1 18.09C3.12 16.65 1.11 13.53 1.11 10c0-1.3.23-2.48.72-3.59C3.25 10.3 4.67 14.2 6.1 18.09zm4.03-6.63l2.58 6.98c-.86.29-1.76.45-2.71.45-.79 0-1.57-.11-2.29-.33.81-2.38 1.62-4.74 2.42-7.1z"/></svg>
<svg class="ic" style="left:73px;top:7.5px" width="35" height="35" viewBox="0 0 20 20" ><path fill="#9ea3a8" d="M14.27 6.87L10 3.14 5.73 6.87 5 6.14l5-4.38 5 4.38zM14 8.42l-4.05 3.43L6 8.38v-.74l4-3.5 4 3.5v.78zM11 9.7V8H9v1.7h2zm-1.73 4.03L5 10 .73 13.73 0 13l5-4.38L10 13zm10 0L15 10l-4.27 3.73L10 13l5-4.38L20 13zM5 11l4 3.5V18H1v-3.5zm10 0l4 3.5V18h-8v-3.5zm-9 6v-2H4v2h2zm10 0v-2h-2v2h2z"/></svg>
<a class="t" style="left:118.00px;top:10.80px;font-size:23.4px;line-height:30px;color:#f0f0f1;letter-spacing:0.145px;">My Sites</a>
<svg class="ic" style="left:235.5px;top:8.5px" width="35" height="35" viewBox="0 0 20 20" ><path fill="#9ea3a8" d="M16 8.5l1.53 1.53-1.06 1.06L10 4.62l-6.47 6.47-1.06-1.06L10 2.5l4 4v-2h2v4zm-6-2.46l6 5.99V18H4v-5.97zM12 17v-5H8v5h4z"/></svg>
<a class="t" style="left:280.00px;top:10.80px;font-size:23.4px;line-height:30px;color:#f0f0f1;letter-spacing:-0.040px;">Shop</a>
<svg class="ic" style="left:362px;top:9px" width="35" height="35" viewBox="0 0 20 20" ><path fill="#9ea3a8" d="M10.2 3.28c3.53 0 6.43 2.61 6.92 6h2.08l-3.5 4-3.5-4h2.32c-.45-1.97-2.21-3.45-4.32-3.45-1.45 0-2.73.71-3.54 1.78L4.95 5.66C6.23 4.2 8.11 3.28 10.2 3.28zm-.4 13.44c-3.52 0-6.43-2.61-6.92-6H.8l3.5-4c1.17 1.33 2.33 2.67 3.5 4H5.48c.45 1.97 2.21 3.45 4.32 3.45 1.45 0 2.73-.71 3.54-1.78l1.71 1.950c-1.28 1.46-3.15 2.38-5.25 2.38z"/></svg>
<span class="t" style="left:406.50px;top:10.80px;font-size:23.4px;line-height:30px;color:#f0f0f1;">1</span>
<svg class="ic" style="left:442px;top:11px" width="35" height="35" viewBox="0 0 20 20" ><path fill="#9ea3a8" d="M5 2h9c1.1 0 2 .9 2 2v7c0 1.1-.9 2-2 2h-2l-5 5v-5H5c-1.1 0-2-.9-2-2V4c0-1.1.9-2 2-2z"/></svg>
<span class="t" style="left:489.50px;top:10.80px;font-size:23.4px;line-height:30px;color:#9ea3a8;">0</span>
<svg class="ic" style="left:529.5px;top:11px" width="35" height="35" viewBox="0 0 20 20" ><path fill="#9ea3a8" d="M17 7v3h-5v5H9v-5H4V7h5V2h3v5h5z"/></svg>
<a class="t" style="left:574.40px;top:10.80px;font-size:23.4px;line-height:30px;color:#f0f0f1;letter-spacing:-0.450px;">New</a>
<a class="t" style="left:648.75px;top:10.80px;font-size:23.4px;line-height:30px;color:#f0f0f1;letter-spacing:0.371px;">View products</a>
<a class="t" style="left:2317.80px;top:10.80px;font-size:23.4px;line-height:30px;color:#f0f0f1;letter-spacing:0.195px;">Howdy, codepress</a>
<svg class="ic" style="left:2522.1px;top:9.4px" width="31.4" height="31.5" viewBox="0 0 31.4 31.5"><rect x=".85" y=".85" width="29.700" height="29.800" fill="#f0f0f1" stroke="#8c8f94" stroke-width="1.700"/><circle cx="16" cy="15.700" r="13.900" fill="#3f97ce"/><path fill="#fff" d="M8.700 7.100H24v14.400H20.200v5h-3.100v-5H8.700z"/><path fill="#3f97ce" d="M11.800 10.700h9.100v8.500h-9.100zM15.600 7.100h1.500v3.700h-1.500zM15.600 19.100h1.500v2.400h-1.500z"/><rect x="14" y="13" width="4.300" height="3.600" fill="#fff"/></svg>
<div style="left:0;top:0;width:1px;height:1277px;background:rgba(255,255,255,.09)"></div>
<div style="left:2552px;top:3px;width:14px;height:686px;border-radius:7px;background:rgba(0,0,0,.5)"></div>
</div>
</body></html>
